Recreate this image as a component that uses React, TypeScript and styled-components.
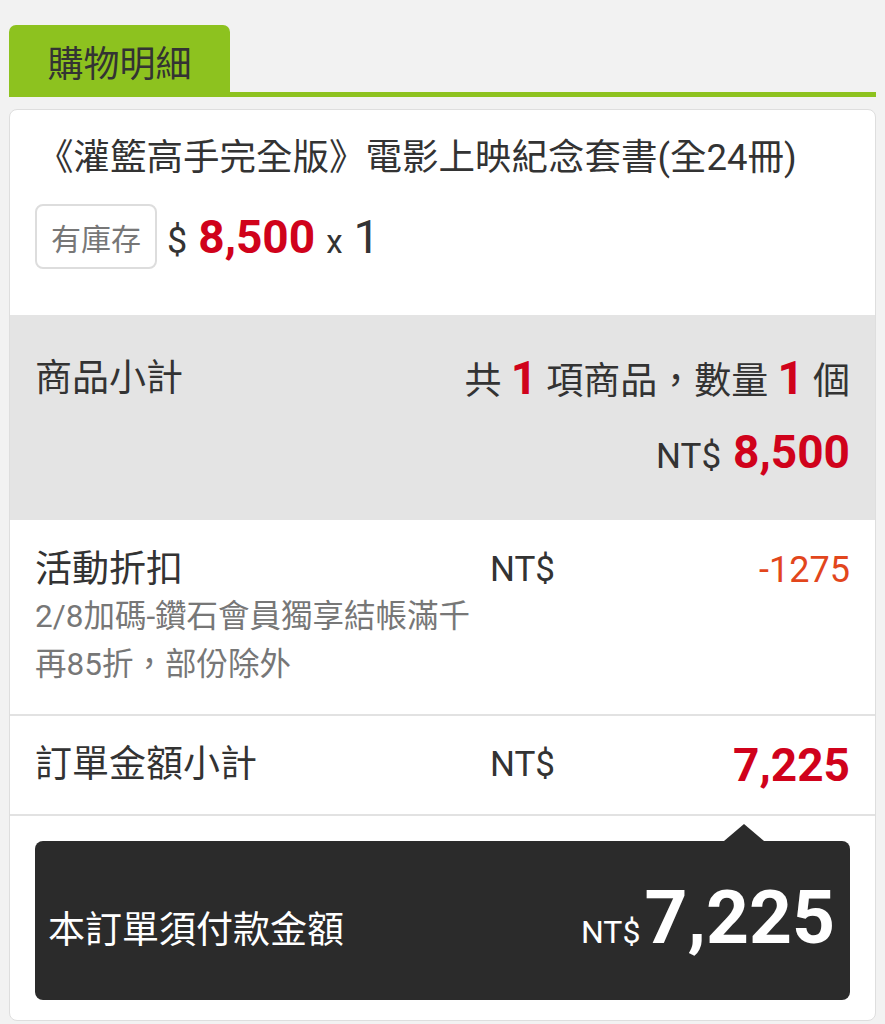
import React from 'react';
import styled, { createGlobalStyle } from 'styled-components';

/*
 * Styles.
 */

const palette = {
  page: '#f2f2f2',
  green: '#8dc21f',
  text: '#333333',
  muted: '#777777',
  red: '#d0021b',
  orange: '#e2461c',
  grayBlock: '#e4e4e4',
  line: '#e2e2e2',
  dark: '#2b2b2b',
  white: '#ffffff'
};

const fontStack = `Roboto, "Noto Sans CJK TC", "Noto Sans", sans-serif`;

const GlobalStyle = createGlobalStyle`
  body {
    margin: 0;
    background-color: ${palette.page};
    font-family: ${fontStack};
    color: ${palette.text};
  }
`;

const Page = styled.div`
  padding: 0 9px;
  min-height: 1024px;
  box-sizing: border-box;
`;

const Header = styled.div`
  display: flex;
  padding-top: 25px;
  border-bottom: 5px solid ${palette.green};
`;

const Tab = styled.div`
  width: 221px;
  height: 67px;
  display: flex;
  align-items: center;
  justify-content: center;
  padding-top: 4px;
  box-sizing: border-box;
  background-color: ${palette.green};
  border-radius: 7px 7px 0 0;
  font-size: 36px;
  color: ${palette.text};
`;

const Card = styled.div`
  margin-top: 12px;
  background-color: ${palette.white};
  border: 1px solid #dedede;
  border-radius: 8px;
  padding-bottom: 20px;
`;

const ProductBlock = styled.div`
  padding: 23px 25px 46px;
`;

const ProductTitle = styled.div`
  font-size: 36.5px;
  line-height: 50px;
  margin-left: 2px;
`;

const PriceRow = styled.div`
  display: flex;
  align-items: center;
  margin-top: 21px;
`;

const StockBadge = styled.div`
  height: 65px;
  display: flex;
  align-items: center;
  padding: 0 14px;
  border: 2px solid #dddddd;
  border-radius: 8px;
  box-sizing: border-box;
  font-size: 30px;
  color: ${palette.muted};
  margin-right: 10px;
`;

const Money = styled.span<{ $size: number; $bold?: boolean; $color?: string }>`
  font-size: ${p => p.$size}px;
  font-weight: ${p => (p.$bold ? 700 : 400)};
  color: ${p => p.$color || palette.text};
  line-height: 1;
`;

const PriceLine = styled.div`
  display: flex;
  align-items: baseline;
  gap: 11px;
`;

const SummaryBlock = styled.div`
  display: flex;
  justify-content: space-between;
  align-items: flex-start;
  background-color: ${palette.grayBlock};
  padding: 40px 25px 35px;
`;

const Label = styled.div`
  font-size: 37px;
  line-height: 48px;
`;

const SummaryRight = styled.div`
  display: flex;
  flex-direction: column;
  align-items: flex-end;
  gap: 23px;
`;

const SummaryCount = styled.div`
  font-size: 37px;
  line-height: 48px;
  white-space: pre;
`;

const SummaryTotal = styled.div`
  display: flex;
  align-items: baseline;
  gap: 12px;
  height: 56px;
`;

const DetailRow = styled.div<{ $padTop: number; $padBottom: number }>`
  display: grid;
  grid-template-columns: 455px auto 1fr;
  align-items: start;
  padding: ${p => p.$padTop}px 25px ${p => p.$padBottom}px;
  border-bottom: 2px solid ${palette.line};
`;

const DetailLabel = styled.div<{ $lineHeight: number }>`
  font-size: 37px;
  line-height: ${p => p.$lineHeight}px;
`;

const Description = styled.div`
  font-size: 31.5px;
  line-height: 48px;
  color: ${palette.muted};
  max-width: 450px;
`;

const Currency = styled.div<{ $lineHeight: number }>`
  font-size: 35px;
  line-height: ${p => p.$lineHeight}px;
`;

const DetailValue = styled.div<{ $lineHeight: number }>`
  display: flex;
  justify-content: flex-end;
  align-items: center;
  height: ${p => p.$lineHeight}px;
`;

const PayBox = styled.div`
  position: relative;
  margin: 25px 25px 0;
  height: 159px;
  box-sizing: border-box;
  padding: 20px 15px 0 13px;
  display: flex;
  align-items: baseline;
  justify-content: space-between;
  background-color: ${palette.dark};
  border-radius: 8px;
  color: ${palette.white};

  &::before {
    content: '';
    position: absolute;
    top: -17px;
    right: 86px;
    border-left: 20px solid transparent;
    border-right: 20px solid transparent;
    border-bottom: 17px solid ${palette.dark};
  }
`;

const PayLabel = styled.div`
  font-size: 37px;
  line-height: 139px;
`;

const PayAmount = styled.div`
  display: flex;
  align-items: baseline;
  gap: 4px;
`;

/*
 * App component.
 */

function App() {
  return (
    <>
      <GlobalStyle />
      <Page>
        <Header>
          <Tab>{'購物明細'}</Tab>
        </Header>

        <Card>
          <ProductBlock>
            <ProductTitle>{'《灌籃高手完全版》電影上映紀念套書(全24冊)'}</ProductTitle>

            <PriceRow>
              <StockBadge>{'有庫存'}</StockBadge>
              <PriceLine>
                <Money $size={36}>{'$'}</Money>
                <Money $size={46} $bold $color={palette.red}>{'8,500'}</Money>
                <Money $size={33}>{'x'}</Money>
                <Money $size={47}>{'1'}</Money>
              </PriceLine>
            </PriceRow>
          </ProductBlock>

          <SummaryBlock>
            <Label>{'商品小計'}</Label>

            <SummaryRight>
              <SummaryCount>
                {'共 '}
                <Money $size={46} $bold $color={palette.red}>{'1'}</Money>
                {' 項商品，數量 '}
                <Money $size={46} $bold $color={palette.red}>{'1'}</Money>
                {' 個'}
              </SummaryCount>

              <SummaryTotal>
                <Money $size={35}>{'NT$'}</Money>
                <Money $size={46} $bold $color={palette.red}>{'8,500'}</Money>
              </SummaryTotal>
            </SummaryRight>
          </SummaryBlock>

          <DetailRow $padTop={27} $padBottom={25}>
            <div>
              <DetailLabel $lineHeight={46}>{'活動折扣'}</DetailLabel>
              <Description>{'2/8加碼-鑽石會員獨享結帳滿千再85折，部份除外'}</Description>
            </div>
            <Currency $lineHeight={46}>{'NT$'}</Currency>
            <DetailValue $lineHeight={46}>
              <Money $size={36} $color={palette.orange}>{'-1275'}</Money>
            </DetailValue>
          </DetailRow>

          <DetailRow $padTop={24} $padBottom={24}>
            <DetailLabel $lineHeight={50}>{'訂單金額小計'}</DetailLabel>
            <Currency $lineHeight={50}>{'NT$'}</Currency>
            <DetailValue $lineHeight={50}>
              <Money $size={46} $bold $color={palette.red}>{'7,225'}</Money>
            </DetailValue>
          </DetailRow>

          <PayBox>
            <PayLabel>{'本訂單須付款金額'}</PayLabel>
            <PayAmount>
              <Money $size={32} $color={palette.white}>{'NT$'}</Money>
              <Money $size={75} $bold $color={palette.white}>{'7,225'}</Money>
            </PayAmount>
          </PayBox>
        </Card>
      </Page>
    </>
  );
}

/*
 * Export the component.
 */

export default App;
